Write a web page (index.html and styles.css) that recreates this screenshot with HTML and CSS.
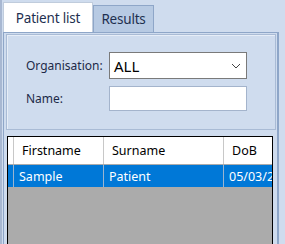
FILE: index.html
```html
<!doctype html>
<html>
<head>
<meta charset="utf-8">
<title>Patients</title>
<link rel="stylesheet" href="styles.css">
</head>
<body>
<div class="window">
    <div class="tabs">
        <span class="tab active">Patient list</span>
        <span class="tab">Results</span>
    </div>
    <div class="panel">
        <div class="filter">
            <div class="row">
                <label>Organisation:</label>
                <div class="combo">
                    <span>ALL</span>
                    <svg width="10" height="6" viewBox="0 0 10 6"><path d="M1 1 L5 5 L9 1" fill="none" stroke="#444" stroke-width="1"/></svg>
                </div>
            </div>
            <div class="row">
                <label>Name:</label>
                <div class="text"></div>
            </div>
        </div>
        <div class="grid">
            <div class="head">
                <span class="gutter"></span>
                <span class="c1">Firstname</span>
                <span class="c2">Surname</span>
                <span class="c3">DoB</span>
            </div>
            <div class="line selected">
                <span class="gutter"></span>
                <span class="c1">Sample</span>
                <span class="c2">Patient</span>
                <span class="c3">05/03/2001</span>
            </div>
        </div>
    </div>
</div>
</body>
</html>
```
FILE: styles.css
```css
html, body { margin:0; padding:0; }
body { width:285px; height:244px; overflow:hidden; background:#cfdcee; font-family:"Noto Sans", "Segoe UI", sans-serif; font-size:12px; }

.window { height:244px; border-left:2px solid #a8b8d2; box-sizing:border-box; padding-left:1px; }

.tabs { display:flex; align-items:flex-end; height:32px; padding-top:3px; box-sizing:border-box; }
.tab { display:flex; align-items:center; justify-content:center; width:61px; height:27px; border:1px solid #8ea6c8; border-bottom:none; background:#b7cae3; color:#1e3050; font-size:13.5px; letter-spacing:-0.2px; box-sizing:border-box; }
.tab.active { width:90px; height:30px; background:#fff; border-color:#c0ccdc; color:#1e3050; }

.panel { width:276px; height:212px; border:1px solid #8ea6c8; border-right-width:2px; border-bottom:none; box-sizing:border-box; padding:1px 1px 0 2px; }

.filter { height:96px; border:1px solid #a9bbd5; box-shadow:inset 1px 1px 0 #e6edf7; box-sizing:border-box; padding:17px 0 0 19px; display:flex; flex-direction:column; gap:7px; }
.row { display:flex; align-items:center; }
.row label { width:83px; color:#1d2a48; }
.combo { width:138px; height:27px; border:1px solid #7a7a7a; background:#fff; box-sizing:border-box; display:flex; align-items:center; justify-content:space-between; padding:0 5px 0 4px; font-size:15px; color:#000; }
.text { width:138px; height:25px; border:1px solid #a4b4cc; background:#fff; box-sizing:border-box; }

.grid { margin:6px 0 0 1px; width:266px; height:120px; border:1px solid #000; border-bottom:none; background:#ababab; box-sizing:border-box; overflow:hidden; }
.head, .line { display:flex; white-space:nowrap; }
.head { height:27px; background:#fff; border-bottom:1px solid #ababab; color:#000; font-size:12.5px; }
.line { height:22px; color:#fff; font-size:12.5px; }
.line.selected { background:#0078d7; }
.head span, .line span { display:flex; align-items:center; box-sizing:border-box; border-right:1px solid #c8c8c8; flex-shrink:0; overflow:hidden; }
.line span { border-right-color:#9bb4cf; }
.gutter { width:6px; }
.c1 { width:90px; padding-left:8px; }
.line .c1 { padding-left:5px; }
.c2 { width:120px; padding-left:8px; }
.line .c2 { padding-left:5px; }
.c3 { width:60px; padding-left:8px; }
.line .c3 { padding-left:5px; }
```
